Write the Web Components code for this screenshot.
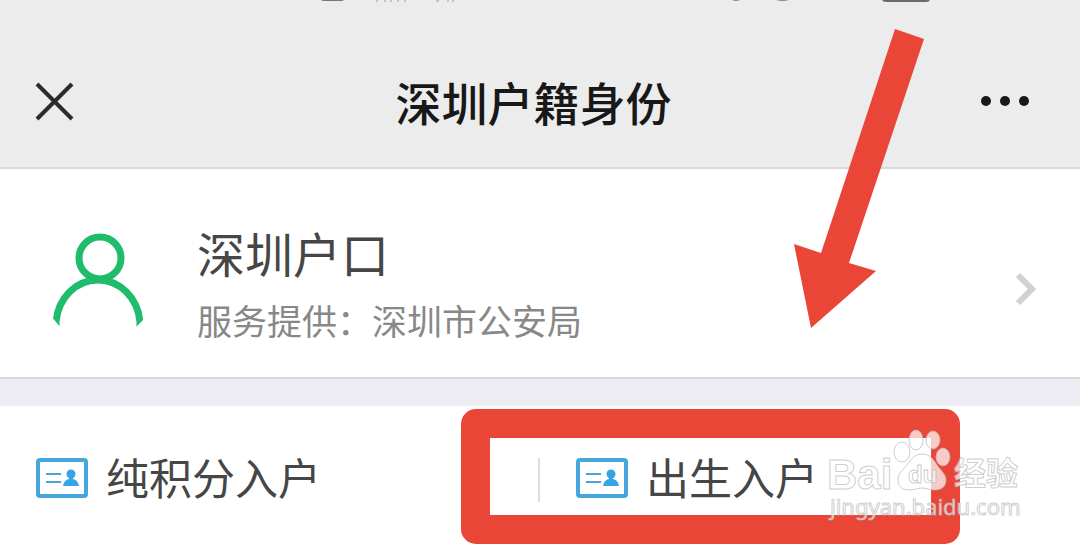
<!DOCTYPE html>
<html lang="zh-CN">
<head>
<meta charset="utf-8">
<meta name="viewport" content="width=device-width, initial-scale=1">
<title>深圳户籍身份</title>
<style>
  body { margin: 0; background: #fff; font-family: "Liberation Sans", "Noto Sans CJK SC", sans-serif; color: #464646; }
</style>
</head>
<body>
<hukou-page></hukou-page>

<template id="status-remnant-template">
  <style>
    :host { position: absolute; top: 0; left: 0; width: 100%; }
    svg { display: block; }
  </style>
  <svg width="960" height="4" aria-hidden="true">
    <path d="M321 0H344Q343 1 341 1H324Q322 1 321 0Z" fill="#777"/>
    <path d="M376 1h2M384 1h2M390 1h2M397 1h2M404 1h2M436 1h3M447 1h2M452 1h2" stroke="#c4c4c4" stroke-width="2"/>
    <path d="M732 0h8q-4 2-8 0ZM776 0h13q-6 2-13 0Z" fill="#888"/>
    <path d="M882 0H930Q929 2 926 2H886Q883 2 882 0Z" fill="#6a6a6a"/>
  </svg>
</template>

<template id="nav-bar-template">
  <style>
    :host { display: block; position: relative; background: #ececec; border-bottom: 2px solid #dadada; }
    header { display: flex; align-items: center; padding: 73px 48px 30px 35px; }
    h1 { flex: 1; margin: 0; text-align: center; font-size: 46px; line-height: 64px; font-weight: 500; color: #181818; }
    button { display: block; flex: none; padding: 0; border: 0; background: none; }
    svg { display: block; }
  </style>
  <status-remnant></status-remnant>
  <header>
    <button type="button" aria-label="关闭">
      <svg width="52" height="48"><path d="M2 3 37 38M37 3 2 38" stroke="#2b2b2b" stroke-width="4" fill="none"/></svg>
    </button>
    <h1><slot></slot></h1>
    <button type="button" aria-label="更多">
      <svg width="52" height="48" fill="#181818"><circle cx="6" cy="20" r="5"/><circle cx="25" cy="20" r="5"/><circle cx="44" cy="20" r="5"/></svg>
    </button>
  </header>
</template>

<template id="service-card-template">
  <style>
    :host { display: block; background: #fff; border-bottom: 2px solid #dadade; }
    a { display: flex; align-items: center; padding: 60px 42px 34px 50px; color: inherit; text-decoration: none; }
    .copy { flex: 1; display: grid; gap: 18px; padding-left: 51px; }
    h2, p { margin: 0; font-weight: 400; }
    h2 { font-size: 48px; line-height: 56px; }
    p { font-size: 35px; line-height: 40px; color: #888; }
    svg { display: block; flex: none; }
  </style>
  <a href="#account">
    <svg width="96" height="108" fill="none" stroke="#1ebc6b" stroke-width="7" aria-hidden="true">
      <circle cx="50" cy="26" r="21"/>
      <path d="M6 97V90C8 66 26 48 48 48S88 66 90 90V97" />
      <path d="M0 83 12 97V104H0ZM96 85 84 97V104H96Z" fill="#fff" stroke="none"/>
    </svg>
    <div class="copy">
      <h2><slot name="title"></slot></h2>
      <p><slot name="provider"></slot></p>
    </div>
    <svg width="24" height="40" fill="none" stroke="#d0d0d7" stroke-width="6" aria-hidden="true"><path d="M4 9 18 23 4 37"/></svg>
  </a>
</template>

<template id="service-entry-template">
  <style>
    :host { display: flex; align-items: center; position: relative; background: #fff; }
    :host([divided])::before { content: ""; width: 2px; height: 44px; margin-left: -2px; background: #dcdcdc; }
    button { flex: 1; display: flex; align-items: center; gap: 18px; padding: 0 36px; border: 0; background: none; font: inherit; font-size: 43px; line-height: 44px; color: inherit; text-align: left; }
    svg { display: block; flex: none; }
  </style>
  <button type="button">
    <svg width="52" height="44" aria-hidden="true">
      <rect x="2" y="2" width="48" height="36" rx="2" fill="none" stroke="#45a5dd" stroke-width="4"/>
      <path d="M10 16H25M10 24H25" stroke="#4aa3d4" stroke-width="2"/>
      <circle cx="35" cy="16" r="4.5" fill="#3ba2df"/>
      <path d="M33 18h4v3q5 1 6 7H27q1-6 6-7Z" fill="#36a4e8"/>
    </svg>
    <span><slot></slot></span>
  </button>
</template>

<template id="tutorial-marks-template">
  <style>
    :host { position: absolute; inset: 0; pointer-events: none; }
    .frame { position: absolute; left: 461px; top: 409px; box-sizing: border-box; width: 499px; height: 135px; border: 29px solid #e94638; border-radius: 15px; }
    svg { position: absolute; left: 0; top: 0; }
  </style>
  <div class="frame"></div>
  <svg width="960" height="340" aria-hidden="true">
    <path d="M895 29 924 39 849 263 876 271 811 328 794 244 821 253Z" fill="#e94638"/>
  </svg>
</template>

<template id="site-watermark-template">
  <style>
    :host { position: absolute; left: 820px; top: 420px; pointer-events: none; }
    svg { display: block; }
    .brand { font-family: "Liberation Sans", sans-serif; font-weight: 700; font-size: 42px; }
    .du { font-family: "Liberation Sans", sans-serif; font-weight: 700; font-size: 24px; }
    .cjk { font-family: "Noto Sans CJK SC", sans-serif; font-weight: 700; font-size: 32px; }
    .url { font-family: "Noto Sans", sans-serif; font-size: 22px; }
  </style>
  <svg width="210" height="106" fill="#fff" fill-opacity="0.72" stroke="#b8b8b8" stroke-opacity="0.7" stroke-width="1">
    <ellipse cx="82" cy="32" rx="8" ry="10"/>
    <ellipse cx="96" cy="20" rx="7" ry="10"/>
    <ellipse cx="113" cy="20" rx="7" ry="9"/>
    <ellipse cx="123" cy="37" rx="7" ry="9"/>
    <path d="M102 34c8 0 12 6 15 11 4 6 9 9 9 15 0 7-5 10-11 10-5 0-9-2-13-2s-8 2-13 2c-7 0-11-4-11-10 0-7 5-10 9-15 4-6 8-11 15-11Z"/>
    <text class="brand" x="7" y="69">Bai</text>
    <text class="du" x="88" y="63">du</text>
    <text class="cjk" x="134" y="65">经验</text>
    <text class="url" x="10" y="95">jingyan.baidu.com</text>
  </svg>
</template>

<template id="hukou-page-template">
  <style>
    :host { display: block; position: relative; overflow: hidden; background: #fff; }
    .entries { display: grid; grid-template-columns: 1fr 1fr; margin: 0; padding: 52px 0 42px; background: #fff; border-top: 27px solid #eeedf3; }
  </style>
  <nav-bar>深圳户籍身份</nav-bar>
  <main>
    <service-card>
      <span slot="title">深圳户口</span>
      <span slot="provider">服务提供：深圳市公安局</span>
    </service-card>
    <section class="entries" aria-label="入户服务">
      <service-entry>纯积分入户</service-entry>
      <service-entry divided>出生入户</service-entry>
    </section>
  </main>
  <tutorial-marks></tutorial-marks>
  <site-watermark></site-watermark>
</template>

<script>
  class TemplateElement extends HTMLElement {
    constructor() {
      super();
      const template = document.getElementById(this.localName + "-template");
      this.attachShadow({ mode: "open" }).append(template.content.cloneNode(true));
    }
  }
  customElements.define("status-remnant", class extends TemplateElement {});
  customElements.define("nav-bar", class extends TemplateElement {});
  customElements.define("service-card", class extends TemplateElement {});
  customElements.define("service-entry", class extends TemplateElement {});
  customElements.define("tutorial-marks", class extends TemplateElement {});
  customElements.define("site-watermark", class extends TemplateElement {});
  customElements.define("hukou-page", class extends TemplateElement {});
</script>
</body>
</html>
